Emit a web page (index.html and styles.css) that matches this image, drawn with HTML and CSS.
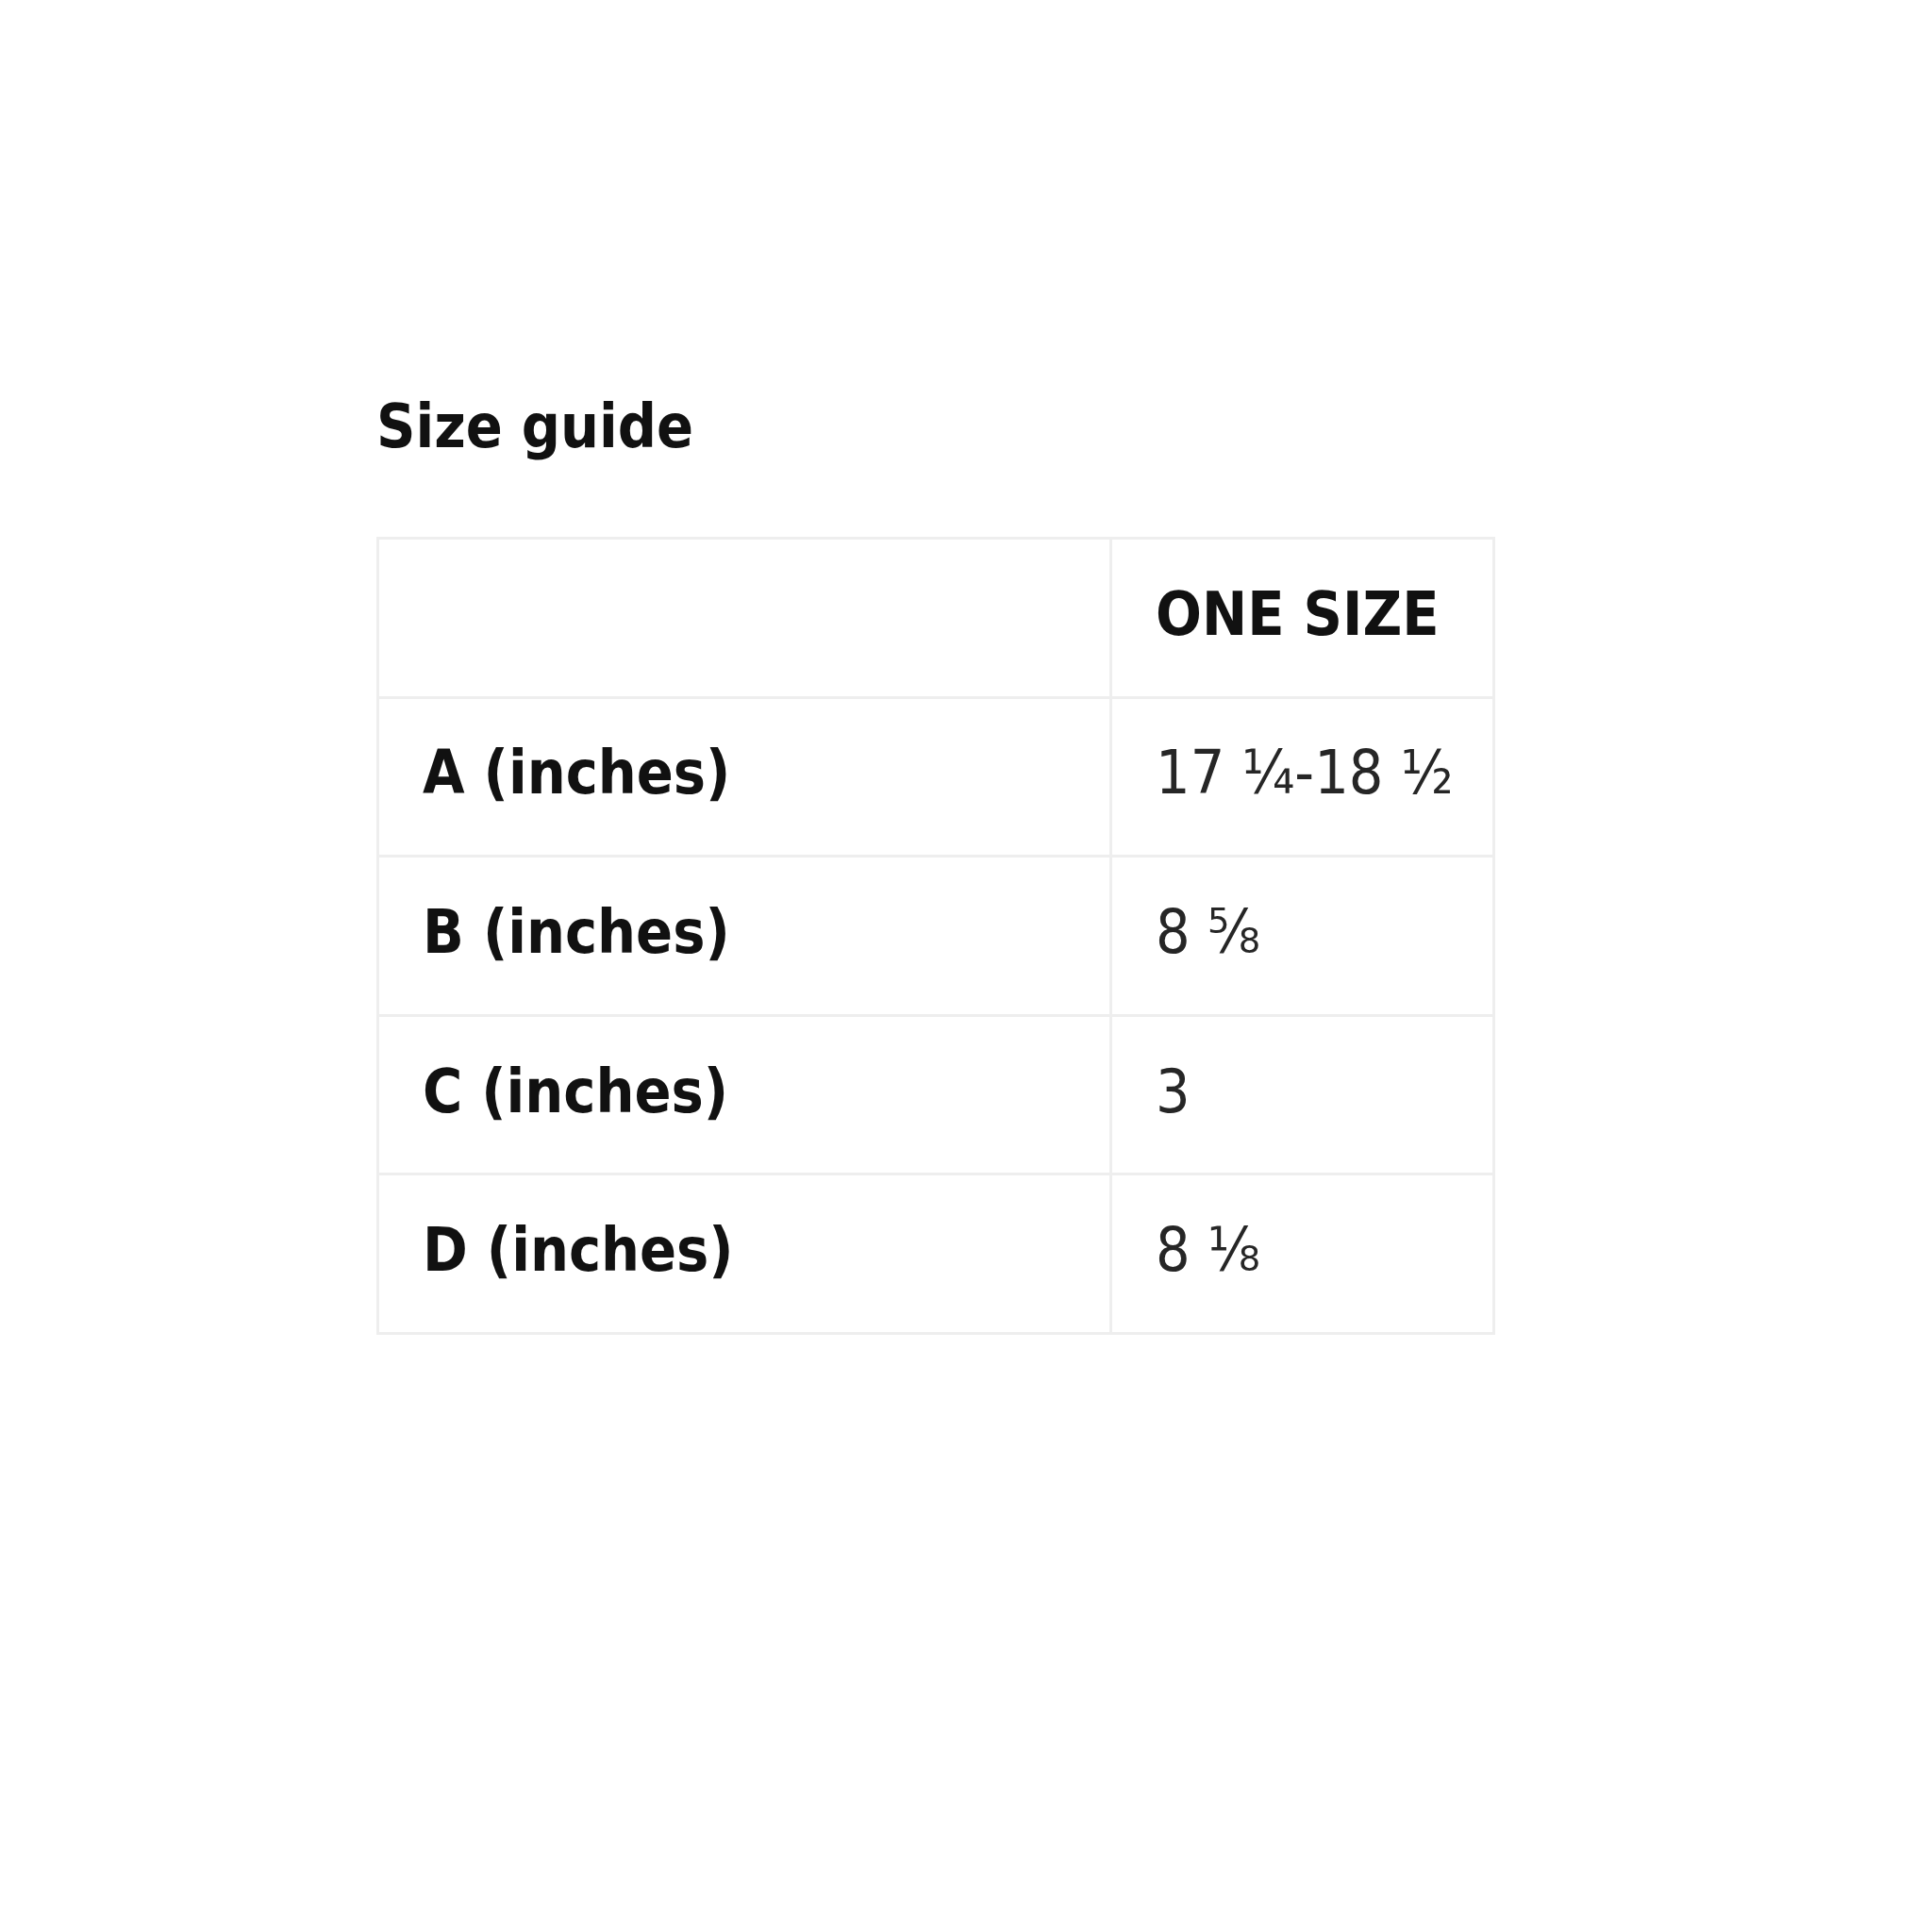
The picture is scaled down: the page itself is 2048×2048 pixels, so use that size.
FILE: index.html
```html
<!DOCTYPE html>
<html lang="en">
<head>
<meta charset="utf-8">
<title>Size guide</title>
<link rel="stylesheet" href="styles.css">
</head>
<body>
<main class="page">
  <h2 class="title">Size guide</h2>
  <table class="sizes">
    <thead>
      <tr><th class="label"></th><th class="value head">ONE SIZE</th></tr>
    </thead>
    <tbody>
      <tr><th class="label">A (inches)</th><td class="value">17 ¼-18 ½</td></tr>
      <tr><th class="label">B (inches)</th><td class="value">8 ⅝</td></tr>
      <tr><th class="label">C (inches)</th><td class="value">3</td></tr>
      <tr><th class="label">D (inches)</th><td class="value">8 ⅛</td></tr>
    </tbody>
  </table>
</main>
</body>
</html>
```

FILE: styles.css
```css
html, body {
  margin: 0;
  padding: 0;
  background: #ffffff;
}

.page {
  padding: 420px 0 0 399px;
  font-family: "DejaVu Sans Condensed", "DejaVu Sans", sans-serif;
  font-stretch: condensed;
  color: #111111;
}

.title {
  margin: 0 0 85px 0;
  font-size: 64px;
  line-height: 64px;
  font-weight: bold;
}

.sizes {
  border-collapse: collapse;
  width: 1186px;
  table-layout: fixed;
}

.sizes th,
.sizes td {
  border: 3px solid #eeeeee;
  height: 168.6px;
  padding: 0 0 8px 46px;
  text-align: left;
  vertical-align: middle;
  font-size: 64px;
  line-height: 64px;
  box-sizing: border-box;
}

.sizes .label {
  width: 777px;
  font-weight: bold;
}

.sizes .value {
  font-weight: normal;
  color: #262626;
}

.sizes .value.head {
  font-weight: bold;
  color: #111111;
}
```
